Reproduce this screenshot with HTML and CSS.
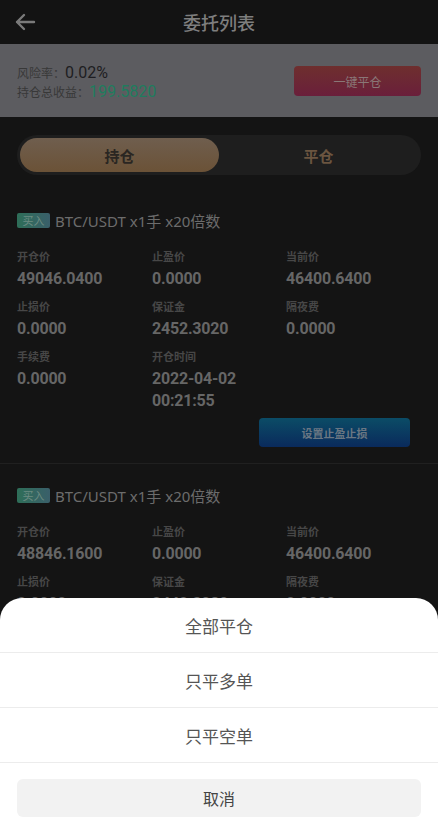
FILE: index.html
```html
<!DOCTYPE html>
<html lang="zh">
<head>
<meta charset="utf-8">
<title>委托列表</title>
<link rel="stylesheet" href="styles.css">
</head>
<body>
<div class="page">
  <header class="topbar">
    <svg class="back" width="22" height="18" viewBox="0 0 22 18"><path d="M20 9H3M10 2L3 9l7 7" fill="none" stroke="#7a7a7a" stroke-width="2.4" stroke-linecap="round" stroke-linejoin="round"/></svg>
    <h1 class="title">委托列表</h1>
  </header>

  <section class="summary">
    <div class="summary-info">
      <div class="sum-row"><span class="sum-label">风险率：</span><span class="sum-val">0.02%</span></div>
      <div class="sum-row"><span class="sum-label">持仓总收益：</span><span class="sum-val sum-green">199.5820</span></div>
    </div>
    <button class="close-all">一键平仓</button>
  </section>

  <nav class="tabs">
    <div class="tab active">持仓</div>
    <div class="tab">平仓</div>
  </nav>

  <article class="card">
    <div class="card-title"><span class="badge">买入</span><span class="pair">BTC/USDT x1手 x20倍数</span></div>
    <div class="grid">
      <div class="cell"><div class="lbl">开仓价</div><div class="val">49046.0400</div></div>
      <div class="cell"><div class="lbl">止盈价</div><div class="val">0.0000</div></div>
      <div class="cell"><div class="lbl">当前价</div><div class="val">46400.6400</div></div>
      <div class="cell"><div class="lbl">止损价</div><div class="val">0.0000</div></div>
      <div class="cell"><div class="lbl">保证金</div><div class="val">2452.3020</div></div>
      <div class="cell"><div class="lbl">隔夜费</div><div class="val">0.0000</div></div>
      <div class="cell"><div class="lbl">手续费</div><div class="val">0.0000</div></div>
      <div class="cell"><div class="lbl">开仓时间</div><div class="val">2022-04-02<br>00:21:55</div></div>
    </div>
    <div class="card-actions"><button class="tp-btn">设置止盈止损</button></div>
  </article>

  <article class="card">
    <div class="card-title"><span class="badge">买入</span><span class="pair">BTC/USDT x1手 x20倍数</span></div>
    <div class="grid">
      <div class="cell"><div class="lbl">开仓价</div><div class="val">48846.1600</div></div>
      <div class="cell"><div class="lbl">止盈价</div><div class="val">0.0000</div></div>
      <div class="cell"><div class="lbl">当前价</div><div class="val">46400.6400</div></div>
      <div class="cell"><div class="lbl">止损价</div><div class="val">0.0000</div></div>
      <div class="cell"><div class="lbl">保证金</div><div class="val">2442.3080</div></div>
      <div class="cell"><div class="lbl">隔夜费</div><div class="val">0.0000</div></div>
    </div>
  </article>
</div>

<div class="sheet">
  <div class="sheet-item">全部平仓</div>
  <div class="sheet-item">只平多单</div>
  <div class="sheet-item">只平空单</div>
  <div class="sheet-cancel-wrap"><button class="sheet-cancel">取消</button></div>
</div>
</body>
</html>
```
FILE: styles.css
```css
* { box-sizing: border-box; margin: 0; padding: 0; }
html, body { height: 100%; }
body {
  background: #141414;
  font-family: "Noto Sans CJK SC", "Noto Sans", sans-serif;
  overflow: hidden;
  width: 438px;
  height: 829px;
  position: relative;
}
.page { height: 829px; overflow: hidden; }

.topbar {
  height: 44px;
  background: #131313;
  display: flex;
  align-items: center;
  justify-content: center;
  position: relative;
}
.back { position: absolute; left: 14px; top: 13px; }
.title { font-size: 18px; font-weight: 500; color: #7e7e7e; line-height: 1; }

.summary {
  height: 73px;
  background: #5c5c60;
  display: flex;
  align-items: center;
  justify-content: space-between;
  padding: 0 17px;
}
.summary-info { display: flex; flex-direction: column; padding-top: 3px; }
.sum-row { display: flex; align-items: baseline; height: 19px; }
.sum-label { font-size: 12px; color: #383838; }
.sum-val { font-family: Roboto, "Noto Sans", sans-serif; font-size: 16px; color: #1e1e22; }
.sum-green { color: #1f7c5e; }
.close-all {
  width: 127px;
  height: 30px;
  border: 0;
  border-radius: 4px;
  background: linear-gradient(180deg, #6e2f2e, #6a1f3b);
  color: #8a7777;
  font-family: "Noto Sans CJK SC", sans-serif;
  font-size: 12px;
  margin-top: 1px;
}

.tabs {
  margin: 18px 17px 14px;
  height: 40px;
  border-radius: 20px;
  background: #1e1e1e;
  padding: 3px;
  display: flex;
}
.tab {
  flex: 1;
  display: flex;
  align-items: center;
  justify-content: center;
  font-size: 15px;
  font-weight: 700;
  color: #6b5540;
  border-radius: 17px;
}
.tab.active {
  background: linear-gradient(180deg, #6f5e4e, #6b5237);
  color: #2a2622;
}

.card { padding: 20px 17px 16px; border-bottom: 1px solid #202020; }
.card-title {
  display: flex;
  align-items: center;
  height: 22px;
}
.pair { font-family: "Noto Sans", "Noto Sans CJK SC", sans-serif; font-size: 15px; color: #6c6c6c; }
.badge {
  display: inline-flex;
  align-items: center;
  justify-content: center;
  width: 33px;
  height: 15px;
  border-radius: 2px;
  background: linear-gradient(90deg, #2e6e58, #3a5f6a);
  color: #6c8c82;
  font-size: 11px;
  margin-right: 5px;
  font-family: "Noto Sans CJK SC", sans-serif;
}
.grid {
  display: grid;
  grid-template-columns: 135px 134px 1fr;
  row-gap: 7px;
  margin-top: 16px;
}
.lbl { font-size: 11px; line-height: 18px; color: #474747; font-weight: 700; }
.val {
  font-family: Roboto, "Noto Sans", sans-serif;
  font-size: 16px;
  line-height: 22px;
  font-weight: 700;
  color: #666666;
  margin-top: 3px;
  letter-spacing: -0.2px;
}
.card-actions { display: flex; justify-content: flex-end; margin-top: 6px; padding-right: 11px; }
.tp-btn {
  width: 151px;
  height: 29px;
  border: 0;
  border-radius: 4px;
  background: linear-gradient(180deg, #0b4c66, #0a2a5c);
  color: #6a7783;
  font-size: 11px;
  font-weight: 700;
  font-family: "Noto Sans CJK SC", sans-serif;
}

.sheet {
  position: absolute;
  left: 0;
  right: 0;
  bottom: 0;
  height: 231px;
  background: #ffffff;
  border-radius: 22px 22px 0 0;
}
.sheet-item {
  height: 55px;
  display: flex;
  align-items: center;
  justify-content: center;
  font-size: 17px;
  color: #555555;
  border-bottom: 1px solid #ececec;
}
.sheet-cancel-wrap { padding: 16px 17px 0; }
.sheet-cancel {
  width: 100%;
  height: 38px;
  border: 0;
  border-radius: 6px;
  background: #f2f2f2;
  color: #444444;
  font-size: 16px;
  font-family: "Noto Sans CJK SC", sans-serif;
}
```
